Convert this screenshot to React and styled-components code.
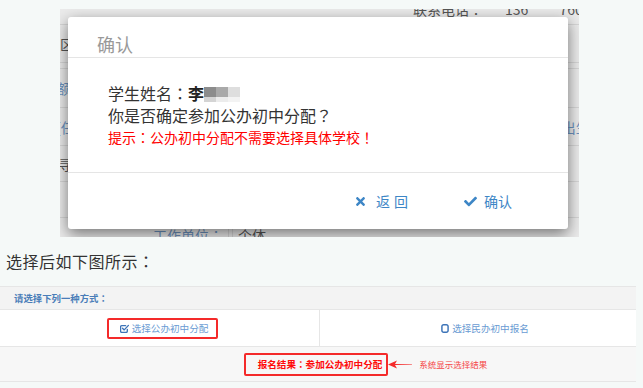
import React from 'react'
import styled, { createGlobalStyle } from 'styled-components'
import { FaTimes, FaCheck } from 'react-icons/fa'

const GlobalStyle = createGlobalStyle`
  html, body {
    margin: 0;
    padding: 0;
    background: #f5f9f8;
    font-family: "Noto Sans CJK SC", "Noto Sans", sans-serif;
  }
`

const Page = styled.div`
  width: 643px;
  height: 388px;
  padding-top: 9px;
  box-sizing: border-box;
  overflow: hidden;
`

// full-width punctuation centred in its cell, as in the reference font
const P = styled.span`
  font-family: "Noto Sans CJK JP", "Noto Sans CJK SC", sans-serif;
`

/* ---------- screenshot of the dialog ---------- */

const Shot = styled.div`
  position: relative;
  margin-left: 60px;
  width: 519px;
  height: 228px;
  overflow: hidden;
  background: #ebebeb;
`

const BgRow = styled.div`
  display: flex;
  align-items: center;
  height: ${({ h }) => h}px;
  border-bottom: 1px solid #d6d6d6;
  box-sizing: border-box;
  position: relative;
  font-size: 14px;
  white-space: nowrap;
`

const BgText = styled.span`
  color: ${({ blue }) => (blue ? '#6d93bf' : '#555')};
  margin-left: ${({ x }) => x || 0}px;
  margin-top: ${({ up }) => (up ? -16 : 0)}px;
  line-height: 16px;
`

const BgDivider = styled.span`
  align-self: stretch;
  width: 1px;
  background: #d6d6d6;
  margin-left: ${({ x }) => x || 0}px;
`

const Modal = styled.div`
  position: absolute;
  left: 8px;
  top: 8px;
  width: 500px;
  height: 212px;
  background: #fff;
  border-radius: 3px;
  box-shadow: 0 5px 15px rgba(0, 0, 0, 0.5);
  display: flex;
  flex-direction: column;
`

const ModalHeader = styled.div`
  border-bottom: 1px solid #e5e5e5;
  padding: 17px 0 0 29px;
  height: 23px;
  font-size: 18px;
  line-height: 20px;
  color: #999;
`

const ModalBody = styled.div`
  height: 114px;
  box-sizing: border-box;
  padding: 24px 0 0 40px;
  color: #333;
`

const Line = styled.div`
  font-size: ${({ small }) => (small ? 14 : 16)}px;
  line-height: ${({ small }) => (small ? 23 : 22)}px;
  color: ${({ red }) => (red ? '#ff0000' : '#333')};
  display: flex;
  align-items: center;
  white-space: nowrap;
`

const Bold = styled.b`
  font-weight: 700;
  color: #222;
`

const Mosaic = styled.span`
  display: inline-grid;
  grid-template-columns: repeat(3, 12px);
  grid-template-rows: 10px 5px;
  margin-top: 2px;
`

const Cell = styled.span`
  background: ${({ shade }) => shade};
`

const ModalFooter = styled.div`
  height: 56px;
  border-top: 1px solid #e5e5e5;
  display: flex;
  align-items: center;
  justify-content: flex-end;
  gap: 52px;
  padding-right: 56px;
`

const FootButton = styled.span`
  display: inline-flex;
  align-items: center;
  gap: ${({ gap }) => gap}px;
  color: #3d86c6;
  font-size: 14px;
  letter-spacing: ${({ spaced }) => (spaced ? 4 : 0)}px;
  svg {
    color: #3d86c6;
  }
`

/* ---------- caption ---------- */

const Caption = styled.div`
  height: 49px;
  line-height: 49px;
  padding-left: 6px;
  font-size: 16px;
  letter-spacing: 0.5px;
  color: #333;
`

/* ---------- result table ---------- */

const Table = styled.div`
  width: 636px;
  border-top: 1px solid #e6e6e6;
  font-size: 9.6px;
`

const HeadRow = styled.div`
  height: 22px;
  display: flex;
  align-items: center;
  padding-left: 14px;
  background: #f3f3f3;
  border-bottom: 1px solid #e6e6e6;
  color: #4a7db8;
  font-weight: 700;
  font-size: 9.4px;
`

const OptionRow = styled.div`
  display: grid;
  grid-template-columns: 319px 1fr;
  height: 37px;
  background: #fff;
  border-bottom: 1px solid #e6e6e6;
  box-sizing: border-box;
`

const OptionCell = styled.div`
  display: flex;
  align-items: center;
  justify-content: center;
  border-left: ${({ divided }) => (divided ? '1px solid #e6e6e6' : 'none')};
  padding-left: ${({ shift }) => shift || 0}px;
`

const Option = styled.span`
  display: inline-flex;
  align-items: center;
  gap: 3px;
  height: 21px;
  box-sizing: border-box;
  padding: 0 ${({ boxed }) => (boxed ? 8 : 0)}px 0 ${({ boxed }) => (boxed ? 11 : 0)}px;
  border: ${({ boxed }) => (boxed ? '2px solid #f42a2a' : 'none')};
  border-radius: 2px;
  color: #6a9bd3;
  white-space: nowrap;
`

const ResultRow = styled.div`
  height: 35px;
  display: flex;
  align-items: center;
  justify-content: center;
  background: #f7f7f7;
  border-bottom: 1px solid #e6e6e6;
  box-sizing: border-box;
  padding-right: 4px;
`

const ResultBox = styled.span`
  position: relative;
  display: inline-flex;
  align-items: center;
  height: 23px;
  box-sizing: border-box;
  padding: 0 4px 0 12px;
  border: 2px solid #f42a2a;
  border-radius: 2px;
  color: #ff0a0a;
  font-weight: 700;
  white-space: nowrap;
`

const Note = styled.span`
  position: absolute;
  left: calc(100% + 2px);
  top: 50%;
  transform: translateY(-50%);
  display: flex;
  align-items: center;
  gap: 7px;
  color: #f54545;
  font-weight: 400;
  font-size: 8.5px;
`

const CheckSquare = () => (
  <svg width="9" height="9" viewBox="0 0 16 16" fill="none" stroke="#3d74b8" strokeWidth="2.4" strokeLinecap="round" strokeLinejoin="round">
    <path d="M13 9.5v3.5a2 2 0 0 1-2 2H3a2 2 0 0 1-2-2V5a2 2 0 0 1 2-2h7" />
    <path d="M4.5 7.5l3 3L15 2.5" />
  </svg>
)

const SquareO = () => (
  <svg width="8" height="9" viewBox="0 0 14 16" fill="none" stroke="#3d74b8" strokeWidth="2.6">
    <rect x="1.5" y="1.5" width="11" height="13" rx="3" />
  </svg>
)

const LeftArrow = () => (
  <svg width="24" height="9" viewBox="0 0 24 9">
    <path d="M0 4.5L9 0.5L7 4L24 4.2V4.8L7 5L9 8.5Z" fill="#f42a2a" />
  </svg>
)

export default function App() {
  return (
    <Page>
      <GlobalStyle />
      <Shot>
        <BgRow h={16}>
          <BgText x={353} up>联系电话<P>：</P></BgText>
          <BgDivider x={13} />
          <BgText x={9} up>136　 　760</BgText>
        </BgRow>
        <BgRow h={38}>
          <BgText x={0}>区县</BgText>
        </BgRow>
        <BgRow h={6} />
        <BgRow h={39}>
          <BgText x={-3} blue>额度</BgText>
        </BgRow>
        <BgRow h={38}>
          <BgText x={-4} blue>[任务</BgText>
          <BgText x={473} blue>出生</BgText>
        </BgRow>
        <BgRow h={36}>
          <BgText x={-2}>寻找</BgText>
        </BgRow>
        <BgRow h={36} />
        <BgRow h={34}>
          <BgDivider x={172} />
          <BgText x={-80} blue>工作单位<P>：</P></BgText>
          <BgDivider x={5} />
          <BgText x={9}>个体</BgText>
        </BgRow>

        <Modal>
          <ModalHeader>确认</ModalHeader>
          <ModalBody>
            <Line>
              学生姓名<P>：</P><Bold>李</Bold>
              <Mosaic>
                <Cell shade="#8c8c8c" />
                <Cell shade="#a9a9a9" />
                <Cell shade="#dedede" />
                <Cell shade="#d4d4d4" />
                <Cell shade="#ececec" />
                <Cell shade="#f3f3f3" />
              </Mosaic>
            </Line>
            <Line>你是否确定参加公办初中分配<P>？</P></Line>
            <Line small red>提示<P>：</P>公办初中分配不需要选择具体学校<P>！</P></Line>
          </ModalBody>
          <ModalFooter>
            <FootButton gap={9} spaced>
              <FaTimes size={13} />
              返回
            </FootButton>
            <FootButton gap={7}>
              <FaCheck size={13} />
              确认
            </FootButton>
          </ModalFooter>
        </Modal>
      </Shot>

      <Caption>选择后如下图所示<P>：</P></Caption>

      <Table>
        <HeadRow>请选择下列一种方式<P>：</P></HeadRow>
        <OptionRow>
          <OptionCell shift={6}>
            <Option boxed>
              <CheckSquare />
              选择公办初中分配
            </Option>
          </OptionCell>
          <OptionCell divided shift={14}>
            <Option>
              <SquareO />
              选择民办初中报名
            </Option>
          </OptionCell>
        </OptionRow>
        <ResultRow>
          <ResultBox>
            报名结果<P>：</P>参加公办初中分配
            <Note>
              <LeftArrow />
              系统显示选择结果
            </Note>
          </ResultBox>
        </ResultRow>
      </Table>
    </Page>
  )
}
